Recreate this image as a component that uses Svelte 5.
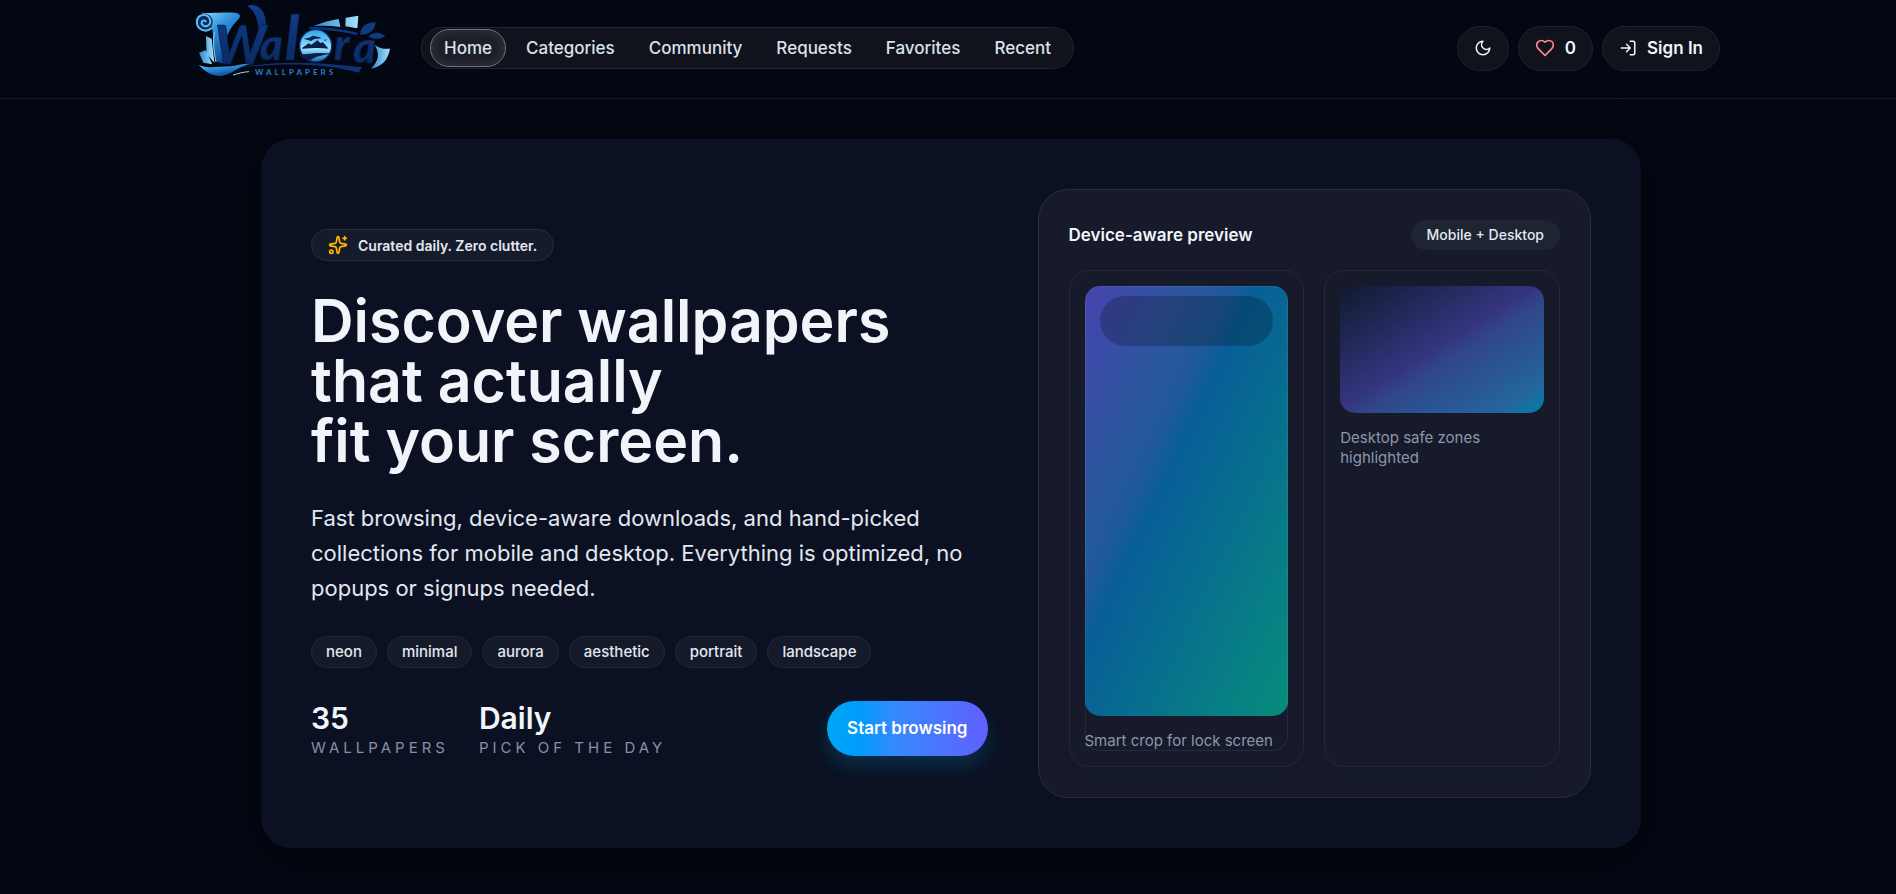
<script lang="ts">
	const links = ['Home', 'Categories', 'Community', 'Requests', 'Favorites', 'Recent'];
	const tags = ['neon', 'minimal', 'aurora', 'aesthetic', 'portrait', 'landscape'];
	const headline = 'Discover wallpapers that actually\nfit your screen.';
	const stats = [
		{ value: '35', label: 'Wallpapers' },
		{ value: 'Daily', label: 'Pick of the day' }
	];

	let active = $state('Home');
	let favorites = $state(0);
</script>

<header class="topbar">
	<div class="topbar-inner">
		<a class="logo" href="#home" aria-label="Walora Wallpapers">
			<svg viewBox="6 0 645 288" width="215" height="96">
				<defs>
					<linearGradient id="scroll" x1="0" y1="0" x2="0.6" y2="1">
						<stop offset="0" stop-color="#8ad8fa" />
						<stop offset="0.4" stop-color="#2f94dc" />
						<stop offset="1" stop-color="#0b3f92" />
					</linearGradient>
					<linearGradient id="ink" x1="0" y1="0" x2="0" y2="1">
						<stop offset="0" stop-color="#123f8d" />
						<stop offset="1" stop-color="#09275c" />
					</linearGradient>
					<linearGradient id="ice" x1="0" y1="0" x2="1" y2="0">
						<stop offset="0" stop-color="#2c86d2" />
						<stop offset="1" stop-color="#a5e2fb" />
					</linearGradient>
					<linearGradient id="sky" x1="0" y1="0" x2="0" y2="1">
						<stop offset="0" stop-color="#2aa4ee" />
						<stop offset="0.6" stop-color="#9be4fd" />
						<stop offset="1" stop-color="#1769b9" />
					</linearGradient>
				</defs>
				<path fill="url(#ice)" d="M57 158l20-7 20 42-27-5zM78 108l17 8 8 72-23-26z" />
				<path fill="url(#scroll)" d="M66 38C100 41 140 35 170 39C184 43 182 53 171 62C142 91 128 129 130 191L109 184C97 150 104 104 94 78C86 64 70 65 66 38Z" />
				<path fill="url(#scroll)" d="M56 194c30 15 62 4 95 5 20-2 50-13 69-7-42 1-64 35-101 36-27 0-48-17-63-34z" />
				<circle cx="72" cy="66" r="26" fill="#0a2d66" />
				<path fill="none" stroke="#61bcec" stroke-width="6" stroke-linecap="round" d="M94 85C76 101 49 87 51 64C53 43 80 38 89 56C96 72 81 84 69 76C60 68 68 57 77 64" />
				<path fill="none" stroke="#8ad8fa" stroke-width="3" d="M103 95c-5 34-1 62 5 91" />
				<path fill="url(#ink)" d="M202 17c32-9 56 16 56 56-3 30-14 50-30 66 10-43 14-93-26-122z" />
				<text class="script" fill="url(#ink)" stroke="#061a3f" stroke-width="2" font-size="130"
					><tspan x="104" y="192" font-size="158">W</tspan><tspan x="240" y="181">a</tspan><tspan
						x="314"
						y="179"
						font-size="180">l</tspan
					><tspan x="462" y="180">r</tspan><tspan x="520" y="190">a</tspan></text
				>
				<circle cx="407" cy="137" r="48" fill="url(#sky)" stroke="#0a3574" stroke-width="4" />
				<path fill="#082047" d="M366 144l20-14 8 4 18-13 9 8 8-2 17 19c-30-4-53-1-80 0zM371 116l17-3 10-6 19 4 8 4-22 2-10 6zM429 118l6 2 7-4-6 7zM358 164c31-2 53-8 94-3-19 5-44 6-60 19-12 1-28-7-34-16z" />
				<path fill="none" stroke="#0b357a" stroke-width="8" stroke-linecap="round" d="M392 84c44 1 85 4 136 17" />
				<path fill="url(#ice)" d="M401 78c25-10 48-17 75-21l5 24c-27-4-53-5-80-3zM497 53l38-6-3 38-36-6z" />
				<path fill="#103b80" d="M541 104c1-26 18-37 46-37-2 23-17 38-46 37zM565 110c15-17 35-13 51-2-19 12-34 10-51 2z" />
				<path fill="url(#ice)" d="M584 135c16 10 28 13 46 11-8 38-24 52-57 60 21-22 29-41 11-71z" />
				<path fill="none" stroke="#8ad8fa" stroke-width="3" stroke-linecap="round" d="M160 225c15-5 30-9 46-10" />
				<path fill="#0c3273" d="M178 203c124-24 248-15 368-1l-10 16c-112-30-232-29-358-15z" />
				<text class="logo-sub" x="225" y="225">WALLPAPERS</text>
			</svg>
		</a>

		<nav class="nav" aria-label="Main">
			{#each links as link (link)}
				<a
					class="nav-link"
					class:active={active === link}
					href="#{link.toLowerCase()}"
					onclick={() => (active = link)}>{link}</a
				>
			{/each}
		</nav>

		<div class="actions">
			<button class="action" aria-label="Toggle theme">
				<svg class="icon" viewBox="0 0 24 24"><path d="M12 3a6 6 0 0 0 9 9 9 9 0 1 1-9-9Z" /></svg>
			</button>
			<button class="action" aria-label="Favorites: {favorites}">
				<svg class="icon heart" viewBox="0 0 24 24">
					<path d="M19 14c1.49-1.46 3-3.21 3-5.5A5.5 5.5 0 0 0 16.5 3c-1.76 0-3 .5-4.5 2-1.5-1.5-2.74-2-4.5-2A5.5 5.5 0 0 0 2 8.5c0 2.3 1.5 4.05 3 5.5l7 7Z" />
				</svg>
				<span>{favorites}</span>
			</button>
			<button class="action">
				<svg class="icon" viewBox="0 0 24 24">
					<path d="M15 3h4a2 2 0 0 1 2 2v14a2 2 0 0 1-2 2h-4M10 17l5-5-5-5M15 12H3" />
				</svg>
				<span>Sign In</span>
			</button>
		</div>
	</div>
</header>

<main class="page">
	<section class="hero">
		<div class="intro">
			<div class="badge">
				<svg class="icon sparkle" viewBox="0 0 24 24">
					<path d="M11.02 2.81a1 1 0 0 1 1.96 0l1.05 5.56a2 2 0 0 0 1.6 1.6l5.56 1.05a1 1 0 0 1 0 1.96l-5.56 1.05a2 2 0 0 0-1.6 1.6l-1.05 5.56a1 1 0 0 1-1.96 0l-1.05-5.56a2 2 0 0 0-1.6-1.6l-5.56-1.05a1 1 0 0 1 0-1.96l5.56-1.05a2 2 0 0 0 1.6-1.6zM20 2v4M22 4h-4" />
					<circle cx="4" cy="20" r="2" />
				</svg>
				<span>Curated daily. Zero clutter.</span>
			</div>

			<h1>{headline}</h1>

			<p class="lead">
				Fast browsing, device-aware downloads, and hand-picked collections for mobile and desktop.
				Everything is optimized, no popups or signups needed.
			</p>

			<div class="tags">
				{#each tags as tag (tag)}
					<a class="tag" href="#{tag}">{tag}</a>
				{/each}
			</div>

			<div class="summary">
				{#each stats as stat (stat.label)}
					<div class="stat">
						<strong>{stat.value}</strong>
						<span>{stat.label}</span>
					</div>
				{/each}
				<button class="cta">Start browsing</button>
			</div>
		</div>

		<div class="preview">
			<div class="preview-head">
				<h2>Device-aware preview</h2>
				<span class="pill">Mobile + Desktop</span>
			</div>
			<div class="devices">
				<div class="device phone">
					<div class="screen mobile"><div class="notch"></div></div>
					<p>Smart crop for lock screen</p>
				</div>
				<div class="device">
					<div class="screen desktop"></div>
					<p>Desktop safe zones highlighted</p>
				</div>
			</div>
		</div>
	</section>
</main>

<style>
	:global(body) {
		background: #030712;
		color: #f1f5f9;
		font-family: Inter, 'Liberation Sans', sans-serif;
	}

	:global(*) {
		box-sizing: border-box;
	}

	a {
		color: inherit;
		text-decoration: none;
	}

	button {
		font: inherit;
		color: inherit;
		border: none;
		cursor: pointer;
	}

	.icon {
		width: 18px;
		height: 18px;
		fill: none;
		stroke: currentColor;
		stroke-width: 2;
		stroke-linecap: round;
		stroke-linejoin: round;
	}

	.topbar {
		padding-left: 6px;
		border-bottom: 1px solid #171b28;
	}

	.topbar-inner {
		display: flex;
		align-items: center;
		max-width: 1538px;
		height: 98px;
		margin: 0 auto;
		padding-bottom: 2px;
	}

	.logo {
		display: flex;
		flex-shrink: 0;
		margin-right: 24px;
	}

	.script {
		font-family: Lato, sans-serif;
		font-style: italic;
		font-weight: 900;
	}

	.logo-sub {
		fill: #2b7cc8;
		font-family: Lato, sans-serif;
		font-size: 24px;
		font-weight: 700;
		letter-spacing: 9px;
	}

	.nav {
		display: flex;
		align-items: center;
		gap: 6px;
		height: 42px;
		padding: 0 8px;
		border: 1px solid #20242d;
		border-radius: 21px;
		background: #10131b;
	}

	.nav-link {
		padding: 0 13px;
		border: 1px solid transparent;
		border-radius: 19px;
		color: #dbe1ea;
		font-size: 17px;
		font-weight: 500;
		line-height: 36px;
	}

	.nav-link.active {
		border-color: #6d717a;
		background: #1c1f28;
		box-shadow: inset 0 0 12px rgba(255, 255, 255, 0.1);
	}

	.actions {
		display: flex;
		gap: 9px;
		margin-left: auto;
	}

	.action {
		display: flex;
		align-items: center;
		gap: 10px;
		height: 45px;
		padding: 0 16px;
		border: 1px solid #1e222c;
		border-radius: 23px;
		background: #10131b;
		font-size: 17px;
		font-weight: 600;
	}

	.heart {
		width: 20px;
		height: 20px;
		color: #ff8b96;
	}

	.page {
		padding: 40px 0 46px 6px;
	}

	.hero {
		display: grid;
		grid-template-columns: 11fr 9fr;
		gap: 50px;
		align-items: center;
		max-width: 1380px;
		margin: 0 auto;
		padding: 50px;
		border-radius: 30px;
		background: #0b1122;
		box-shadow: 0 10px 40px rgba(0, 0, 0, 0.5);
	}

	.intro {
		display: flex;
		flex-direction: column;
		align-items: flex-start;
		gap: 30px;
	}

	.badge {
		display: flex;
		align-items: center;
		gap: 10px;
		height: 32px;
		padding: 0 16px;
		border: 1px solid #272c3a;
		border-radius: 16px;
		background: #161b2b;
		color: #e2e8f0;
		font-size: 14px;
		font-weight: 600;
	}

	.sparkle {
		width: 20px;
		height: 20px;
		color: #ffb900;
	}

	h1,
	h2,
	p {
		margin: 0;
	}

	h1 {
		font-size: 59px;
		font-weight: 600;
		line-height: 60px;
		white-space: pre-line;
	}

	.lead {
		color: #e2e8f0;
		font-size: 22px;
		line-height: 35px;
	}

	.tags {
		display: flex;
		flex-wrap: wrap;
		gap: 10px;
	}

	.tag {
		padding: 0 14px;
		border: 1px solid #222736;
		border-radius: 16px;
		background: #151a2a;
		color: #e2e8f0;
		font-size: 15px;
		font-weight: 500;
		line-height: 30px;
	}

	.summary {
		display: flex;
		align-items: center;
		gap: 30px;
		width: 100%;
	}

	.stat {
		display: flex;
		flex-direction: column;
	}

	.stat strong {
		font-size: 30px;
		font-weight: 600;
		line-height: 40px;
	}

	.stat span {
		color: #8491a6;
		font-size: 15px;
		letter-spacing: 4px;
		line-height: 20px;
		text-transform: uppercase;
	}

	.cta {
		height: 55px;
		margin-left: auto;
		padding: 0 20px;
		border-radius: 28px;
		background: linear-gradient(90deg, #00a6f4, #009cfb 20%, #3689fd 42%, #615fff);
		box-shadow: 0 10px 20px rgba(0, 166, 244, 0.2);
		color: #fff;
		font-size: 17px;
		font-weight: 600;
	}

	.preview {
		padding: 30px;
		border: 1px solid #282d3b;
		border-radius: 30px;
		background: #161a2b;
	}

	.preview-head {
		display: flex;
		align-items: center;
		justify-content: space-between;
		margin-bottom: 20px;
	}

	h2 {
		font-size: 17px;
		font-weight: 600;
	}

	.pill {
		padding: 0 16px;
		border-radius: 15px;
		background: #1f2432;
		color: #e2e8f0;
		font-size: 14px;
		font-weight: 500;
		line-height: 30px;
	}

	.devices {
		display: grid;
		grid-template-columns: 1fr 1fr;
		gap: 20px;
	}

	.device {
		position: relative;
		padding: 15px;
		border: 1px solid #242938;
		border-radius: 20px;
		box-shadow: 0 10px 10px -4px rgba(20, 26, 36, 0.6);
	}

	.device p {
		margin-top: 15px;
		color: #8a98ad;
		font-size: 15px;
		line-height: 20px;
	}

	/* bezel outline around the phone and its caption */
	.phone::after {
		content: '';
		position: absolute;
		inset: 15px;
		border: 1px solid rgba(255, 255, 255, 0.07);
		border-radius: 15px;
	}

	.screen {
		border-radius: 15px;
	}

	.mobile {
		aspect-ratio: 9 / 19;
		padding: 10px 15px;
		background: linear-gradient(to bottom right, #4643ae, #2e569f 24%, #1f5a9a 36%, #085e98 42%, #078d7c);
	}

	.notch {
		height: 50px;
		border-radius: 25px;
		background: rgba(0, 0, 0, 0.22);
	}

	.desktop {
		aspect-ratio: 16 / 10;
		background: linear-gradient(to bottom right, #101a2f, #34357f 48%, #31468a 56%, #23669c 88%, #007fae);
	}
</style>
